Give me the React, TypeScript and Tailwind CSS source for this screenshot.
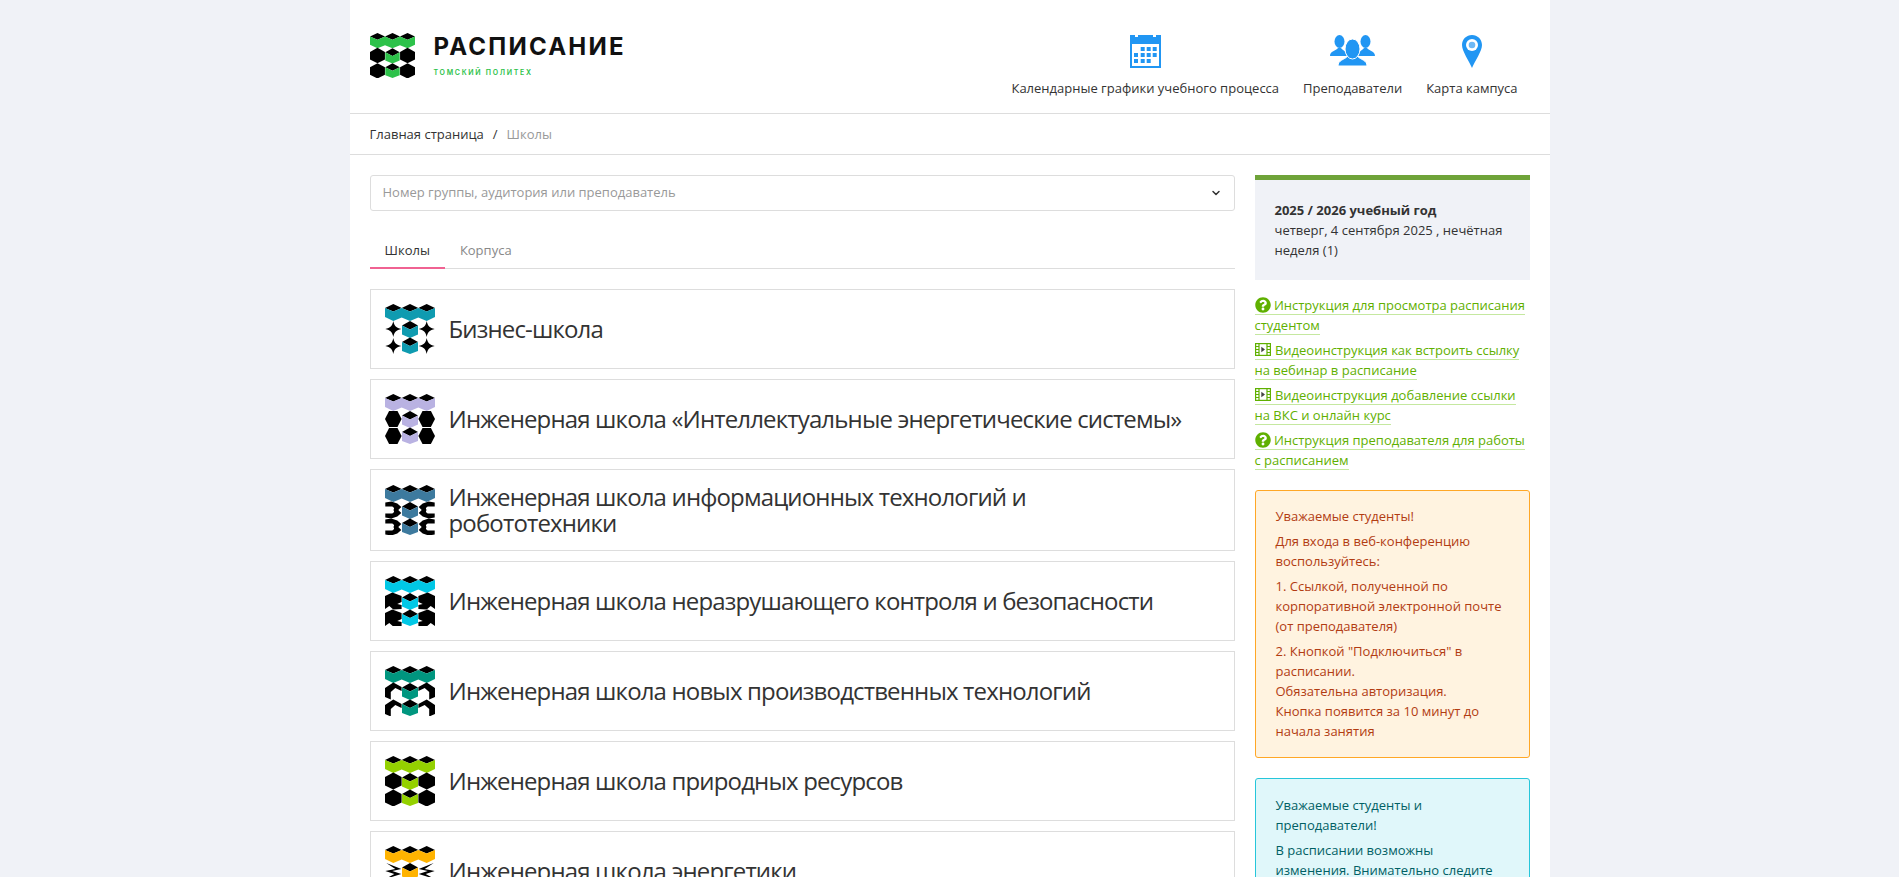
import type { ReactNode } from "react";
import { ChevronDown } from "lucide-react";
import { FaQuestionCircle } from "react-icons/fa";

type SideKind = "star" | "hex" | "wave" | "spike" | "arch" | "cube" | "bolt";

const schools: { title: string; color: string; side: SideKind }[] = [
  { title: "Бизнес-школа", color: "#0f9bb0", side: "star" },
  { title: "Инженерная школа «Интеллектуальные энергетические системы»", color: "#b9b2e2", side: "hex" },
  { title: "Инженерная школа информационных технологий и робототехники", color: "#3d7a9e", side: "wave" },
  { title: "Инженерная школа неразрушающего контроля и безопасности", color: "#00c8e6", side: "spike" },
  { title: "Инженерная школа новых производственных технологий", color: "#00967f", side: "arch" },
  { title: "Инженерная школа природных ресурсов", color: "#94d100", side: "cube" },
  { title: "Инженерная школа энергетики", color: "#ffb300", side: "bolt" },
];

// one side cell, drawn around 0,0 in a box about 16x16
function SidePiece({ kind }: { kind: SideKind }) {
  switch (kind) {
    case "star":
      return <path d="M0-8C1-3 3-1 8 0 3 1 1 3 0 8-1 3-3 1-8 0-3-1-1-3 0-8Z" fill="#000" />;
    case "hex":
      return <path d="M-4.200-8H4.200L8.300 0 4.200 8H-4.200L-8.300 0Z" fill="#000" />;
    case "wave":
      return <path d="M-8-7.500-2-8.500 4-6.500 8-3 5 0 8 3 4 6.500-2 8.500-8 7.500V3.500H-1Q2 2 0 0 2-2-1-3.500H-8Z" fill="#000" />;
    case "spike":
      return <path d="M-8.300-5-1-8.500 8.300-5V1L4 3 8.300 4V8L0 8.500-4 5-8.300 8Z" fill="#000" />;
    case "arch":
      return <path d="M-8.300-3 0-8.500 8.300-4V0L2-3-2.500 1V8.500L-8.300 6Z" fill="#000" />;
    case "cube":
      return <path d="M-8.300-4 0-8.500 8.300-4V4.500L0 8.500-8.300 4.500Z" fill="#000" />;
    case "bolt":
      return <path d="M-7-8 8-2-1 0 8 3-8 8 1 3-8 0 2-2Z" fill="#000" />;
  }
}

function CubeMark({ color, side, size }: { color: string; side: SideKind; size: number }) {
  return (
    <svg width={size} height={size} viewBox="0 0 50 50" className="shrink-0">
      <path d="M0 4 8.300 0 16.700 4 25 0 33.300 4 41.700 0 50 4 41.700 7.500 33.300 4 25 7.500 16.700 4 8.300 7.500Z" fill="#000" />
      <path d="M0 4 8.300 7.500 16.700 4 25 7.500 33.300 4 41.700 7.500 50 4V13L41.700 17 33.300 13.500 25 17 16.700 13.500 8.300 17 0 13Z" fill={color} />
      <g transform="translate(8.3 25)"><SidePiece kind={side} /></g>
      <g transform="translate(8.3 42)"><SidePiece kind={side} /></g>
      <g transform="translate(41.7 25) scale(-1 1)"><SidePiece kind={side} /></g>
      <g transform="translate(41.7 42) scale(-1 1)"><SidePiece kind={side} /></g>
      <path d="M17 21.500 25 17 33 21.500 25 25.500Z" fill="#000" />
      <path d="M17 21.500 25 25.500 33 21.500V30.500L25 34 17 30.500Z" fill={color} />
      <path d="M17 38 25 33.500 33 38 25 42Z" fill="#000" />
      <path d="M17 38 25 42 33 38V47L25 50 17 47Z" fill={color} />
    </svg>
  );
}

function CalendarIcon() {
  const cells = [
    [10.7, 12], [16.7, 12], [22.7, 12],
    [4, 18], [10.7, 18], [16.7, 18], [22.7, 18],
    [4, 24], [10.7, 24], [16.7, 24],
  ];
  return (
    <svg width="31" height="33" viewBox="0 0 31 33" fill="#2196f3">
      <path fillRule="evenodd" d="M0 0H5V2H8V0H23V2H26V0H31V33H0ZM2 9V31H29V9Z" />
      {cells.map(([x, y]) => (
        <rect key={`${x}-${y}`} x={x} y={y} width="4" height="4" />
      ))}
    </svg>
  );
}

function PeopleIcon() {
  return (
    <svg width="45" height="31" viewBox="0 0 45 31" fill="#2196f3">
      <ellipse cx="9.500" cy="6.500" rx="5" ry="6.500" />
      <ellipse cx="35.500" cy="6.500" rx="5" ry="6.500" />
      <path d="M0 21C0 16 6 16 8 13H11C13 16 17 16 17 21Z" />
      <path d="M45 21C45 16 39 16 37 13H34C32 16 28 16 28 21Z" />
      <path d="M8 31C8 25 14 25 18 21H27C31 25 37 25 37 31Z" stroke="#fff" strokeWidth="1" />
      <ellipse cx="22.500" cy="14" rx="7.500" ry="10" stroke="#fff" strokeWidth="1" />
    </svg>
  );
}

function PinIcon() {
  return (
    <svg width="20" height="33" viewBox="0 0 20 33" fill="#2196f3">
      <path d="M10 0C15.500 0 20 4.300 20 10 20 16 13 26 10 33 7 26 0 16 0 10 0 4.300 4.500 0 10 0Z" />
      <circle cx="10" cy="10" r="6" fill="#fff" />
      <circle cx="10" cy="10" r="3.300" fill="#6db8f5" />
    </svg>
  );
}

function VideoIcon() {
  return (
    <svg width="16" height="13" viewBox="0 0 16 13" className="mr-[1px] inline-block align-[-1px]">
      <rect x=".6" y=".6" width="14.800" height="11.800" fill="none" stroke="#5fb000" strokeWidth="1.200" />
      <path d="M4 0V13M12 0V13" stroke="#5fb000" strokeWidth="1.200" />
      <path d="M1 3.500H4M1 6.500H4M1 9.500H4M12 3.500H15M12 6.500H15M12 9.500H15" stroke="#5fb000" strokeWidth="1" />
      <path d="M6.300 3.700 10 6.500 6.300 9.300Z" fill="#444" />
    </svg>
  );
}

function NavItem({ icon, label }: { icon: ReactNode; label: string }) {
  return (
    <a className="flex flex-col items-center px-3 text-[13px] leading-5 text-[#333]">
      <div className="flex h-[33px] items-start">{icon}</div>
      <span className="mt-[10px] whitespace-nowrap">{label}</span>
    </a>
  );
}

function HelpLink({ kind, children }: { kind: "help" | "video"; children: ReactNode }) {
  return (
    <p className="mb-[5px] text-[13px] leading-5 text-[#5fb000]">
      <a className="border-b border-[#c5e8a0]">
        {kind === "help" ? (
          <FaQuestionCircle className="inline-block h-[16px] w-[16px] align-[-3px] text-[#5fb000]" />
        ) : (
          <VideoIcon />
        )}{" "}
        {children}
      </a>
    </p>
  );
}

export default function App() {
  return (
    <div className="h-screen overflow-hidden bg-[#f0f2f7] font-['Open_Sans',sans-serif]">
      <div className="mx-auto h-full w-[1200px] bg-white">
        <header className="flex h-[114px] items-start justify-between border-b border-[#ddd] pl-5 pr-5">
          <a className="mt-[33px] flex items-start gap-[19px]">
            <CubeMark color="#2dc24a" side="cube" size={45} />
            <div>
              <div className="font-['Inter',sans-serif] text-[24px] leading-[28px] font-bold tracking-[2.2px] text-[#111]">РАСПИСАНИЕ</div>
              <div className="mt-[7px] font-['Inter',sans-serif] text-[7px] leading-[10px] font-semibold tracking-[1.7px] text-[#2dc24a]">ТОМСКИЙ ПОЛИТЕХ</div>
            </div>
          </a>
          <nav className="mt-[35px] flex">
            <NavItem icon={<CalendarIcon />} label="Календарные графики учебного процесса" />
            <NavItem icon={<PeopleIcon />} label="Преподаватели" />
            <NavItem icon={<PinIcon />} label="Карта кампуса" />
          </nav>
        </header>

        <div className="flex h-[41px] items-center gap-[9px] border-b border-[#ddd] px-5 pt-[2px] text-[13px] text-[#333]">
          <a>Главная страница</a>
          <span>/</span>
          <span className="text-[#999]">Школы</span>
        </div>

        <div className="flex gap-5 px-5 pt-5">
          <main className="w-[865px] shrink-0">
            <div className="flex h-[36px] items-center justify-between rounded-[3px] border border-[#ddd] pl-3 pr-3 text-[13px] text-[#999]">
              <span>Номер группы, аудитория или преподаватель</span>
              <ChevronDown className="h-3 w-3 text-[#333]" strokeWidth={3} />
            </div>

            <div className="mt-5 flex h-[38px] border-b border-[#ddd] text-[13px]">
              <a className="h-[38px] border-b-2 border-[#f06292] px-[15px] pt-[9px] leading-5 text-[#333]">Школы</a>
              <a className="px-[15px] pt-[9px] leading-5 text-[#888]">Корпуса</a>
            </div>

            <div className="mt-5 flex flex-col gap-[10px]">
              {schools.map((s) => (
                <a key={s.title} className="flex items-center gap-[14px] border border-[#ddd] px-[14px] py-[14px]">
                  <CubeMark color={s.color} side={s.side} size={50} />
                  <span className="max-w-[740px] text-[24px] leading-[26px] tracking-[-0.85px] text-[#333]">{s.title}</span>
                </a>
              ))}
            </div>
          </main>

          <aside className="w-[275px] shrink-0">
            <div className="border-t-[5px] border-[#6fa339] bg-[#f0f2f7] px-5 pt-5 pb-[20px] text-[13px] leading-5 text-[#333]">
              <div className="font-bold">2025 / 2026 учебный год</div>
              <div>четверг, 4 сентября 2025 , нечётная неделя (1)</div>
            </div>

            <div className="mt-[15px]">
              <HelpLink kind="help">Инструкция для просмотра расписания студентом</HelpLink>
              <HelpLink kind="video">Видеоинструкция как встроить ссылку на вебинар в расписание</HelpLink>
              <HelpLink kind="video">Видеоинструкция добавление ссылки на ВКС и онлайн курс</HelpLink>
              <HelpLink kind="help">Инструкция преподавателя для работы с расписанием</HelpLink>
            </div>

            <div className="mt-5 rounded-[3px] border border-[#ffa726] bg-[#fff3e0] px-5 pt-[15px] pb-4 text-[13px] leading-5 text-[#b23c12]">
              <p className="mb-[5px]">Уважаемые студенты!</p>
              <p className="mb-[5px]">Для входа в веб-конференцию воспользуйтесь:</p>
              <p className="mb-[5px]">1. Ссылкой, полученной по корпоративной электронной почте (от преподавателя)</p>
              <p>
                2. Кнопкой "Подключиться" в расписании.
                <br />
                Обязательна авторизация.
                <br />
                Кнопка появится за 10 минут до начала занятия
              </p>
            </div>

            <div className="mt-5 rounded-[3px] border border-[#26c6da] bg-[#e0f7fa] px-5 pt-4 pb-10 text-[13px] leading-5 text-[#006064]">
              <p className="mb-[5px]">Уважаемые студенты и преподаватели!</p>
              <p>В расписании возможны изменения. Внимательно следите</p>
            </div>
          </aside>
        </div>
      </div>
    </div>
  );
}
